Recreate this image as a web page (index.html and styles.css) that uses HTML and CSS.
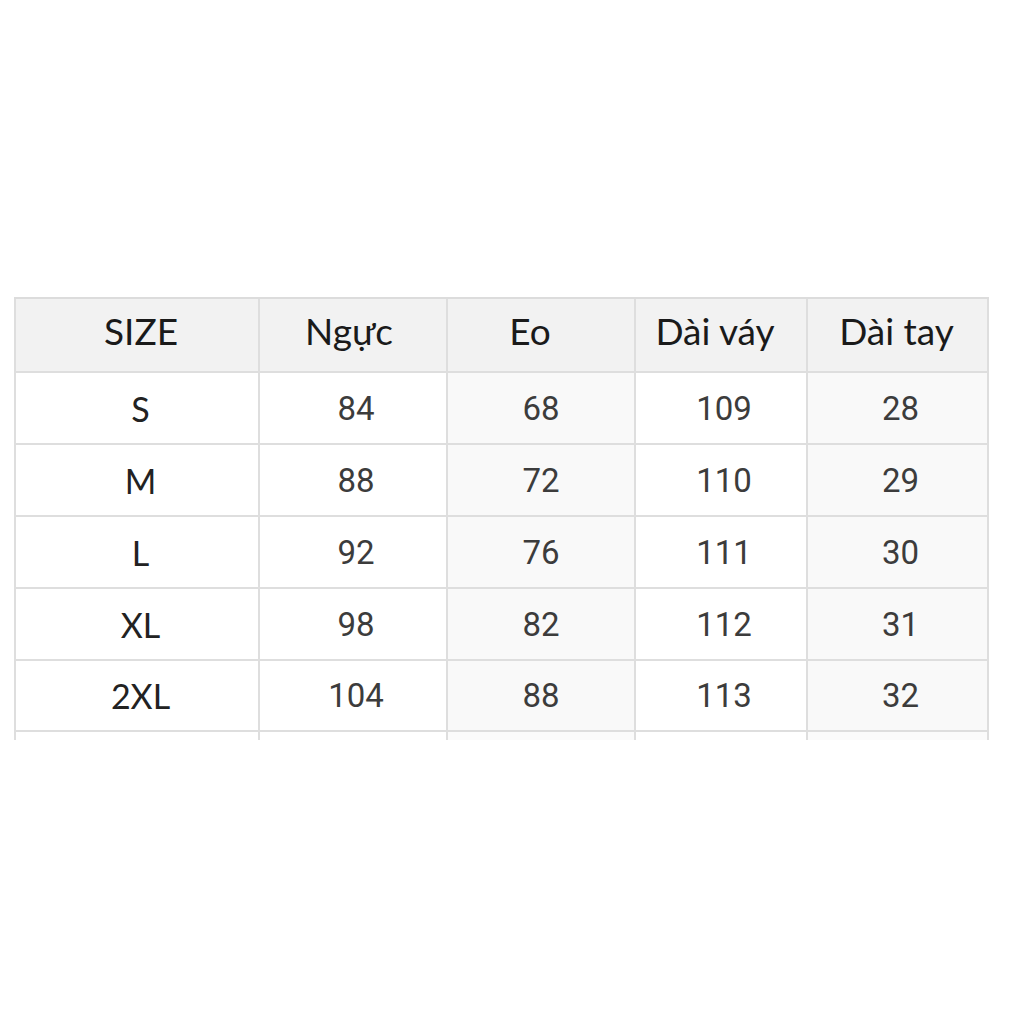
FILE: index.html
```html
<!DOCTYPE html>
<html lang="vi">
<head>
<meta charset="utf-8">
<title>Size chart</title>
<link rel="stylesheet" href="styles.css">
</head>
<body>
<div class="page">
  <div class="chart">
    <div class="cell head h1">SIZE</div>
    <div class="cell head h2">Ngực</div>
    <div class="cell head h3">Eo</div>
    <div class="cell head h4">Dài váy</div>
    <div class="cell head h5">Dài tay</div>

    <div class="cell size">S</div><div class="cell num">84</div><div class="cell num tint eo">68</div><div class="cell num">109</div><div class="cell num tint">28</div>
    <div class="cell size">M</div><div class="cell num">88</div><div class="cell num tint eo">72</div><div class="cell num">110</div><div class="cell num tint">29</div>
    <div class="cell size">L</div><div class="cell num">92</div><div class="cell num tint eo">76</div><div class="cell num">111</div><div class="cell num tint">30</div>
    <div class="cell size">XL</div><div class="cell num">98</div><div class="cell num tint eo">82</div><div class="cell num">112</div><div class="cell num tint">31</div>
    <div class="cell size">2XL</div><div class="cell num">104</div><div class="cell num tint eo">88</div><div class="cell num">113</div><div class="cell num tint">32</div>

    <div class="cell stub"></div><div class="cell stub"></div><div class="cell stub tint"></div><div class="cell stub"></div><div class="cell stub tint"></div>
  </div>
</div>
</body>
</html>
```
FILE: styles.css
```css
html, body {
  margin: 0;
  padding: 0;
  background: #ffffff;
}
.page {
  width: 1024px;
  height: 1024px;
  padding-top: 297px;
  padding-left: 14px;
  box-sizing: border-box;
}
.chart {
  display: grid;
  grid-template-columns: 244px 188px 188px 172px 183px;
  grid-template-rows: 74px 72px 72px 72px 72px 71px 8px;
  width: 975px;
  border-top: 2px solid #dcdcdc;
}
.cell {
  display: flex;
  align-items: center;
  justify-content: center;
  border-left: 2px solid #dedede;
  border-bottom: 2px solid #dedede;
  box-sizing: border-box;
}
.cell:nth-child(5n) {
  border-right: 2px solid #dedede;
}
.head {
  background: #f2f2f2;
  font-family: Lato, "Noto Sans", sans-serif;
  font-size: 37px;
  color: #1a1a1a;
  padding-bottom: 10px;
}
.h1 { padding-left: 8px; }
.h2 { padding-right: 8px; }
.h3 { padding-right: 22px; }
.h4 { padding-right: 12px; }
.h5 { padding-right: 2px; }
.size {
  font-family: Lato, "Noto Sans", sans-serif;
  font-size: 34px;
  color: #222222;
  padding-left: 7px;
}
.num {
  font-family: Roboto, "Noto Sans", sans-serif;
  font-size: 33px;
  color: #3c3c3c;
  padding-left: 6px;
}
.num.eo {
  padding-left: 0;
}
.tint {
  background: #f9f9f9;
}
.stub {
  border-bottom: none;
}
.stub.tint {
  background: #fbfbfb;
}
```
